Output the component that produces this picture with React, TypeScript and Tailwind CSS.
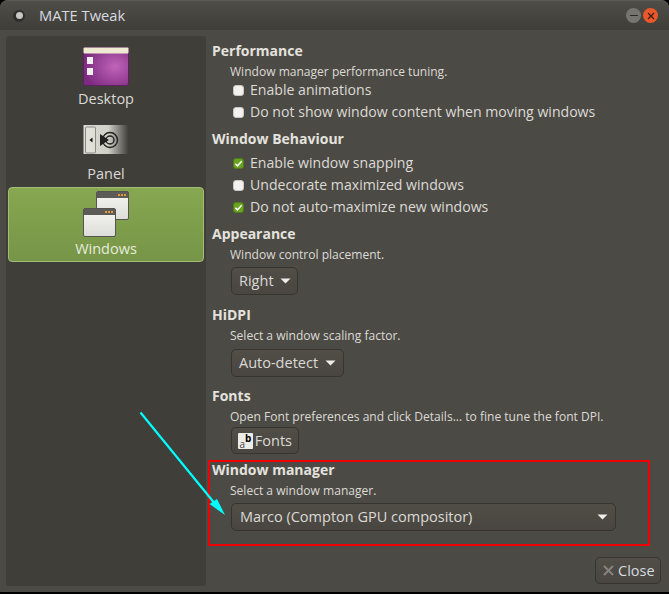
import type { ReactNode } from "react";

const Caret = () => (
  <svg width="11" height="6" viewBox="0 0 11 6" className="shrink-0">
    <path d="M0.5 0.5h10L5.5 5.5z" fill="#efedea" />
  </svg>
);

function Check({ label, checked }: { label: string; checked?: boolean }) {
  return (
    <div className="flex h-[22px] items-center pl-[3px] text-[14.1px]">
      <span
        className={`mr-[6px] flex h-[11px] w-[11px] items-center justify-center rounded-[3px] ${
          checked ? "bg-[#6aa321] border border-[#4f7d16]" : "bg-[#f2f1ef] border border-[#c9c7c3]"
        }`}
      >
        {checked && (
          <svg width="9" height="9" viewBox="0 0 10 10">
            <path d="M1.5 5.2l2.4 2.4L8.5 2.6" fill="none" stroke="#fff" strokeWidth="1.6" />
          </svg>
        )}
      </span>
      <span>{label}</span>
    </div>
  );
}

function Heading({ children, className }: { children: ReactNode; className?: string }) {
  return <h2 className={`h-[20px] text-[14px] leading-[20px] font-bold text-[#e4e2de] ${className ?? ""}`}>{children}</h2>;
}

function Desc({ children }: { children: ReactNode }) {
  return <p className="mt-px h-[20px] pl-[18px] text-[12.05px] leading-[20px] text-[#dcdad5]">{children}</p>;
}

const btn = "flex items-center rounded-[5px] border border-[#35342f] bg-gradient-to-b from-[#514e48] to-[#494641] text-[14.5px]";

function SideItem({ label, icon, active }: { label: string; icon: ReactNode; active?: boolean }) {
  return (
    <div
      className={`flex h-[75px] flex-col items-center rounded-[4px] border ${
        active ? "border-[#a3bd76] bg-gradient-to-b from-[#87a750] to-[#779548] text-[#e6ebdc]" : "border-transparent text-[#dcdad5]"
      }`}
    >
      <div className="flex h-[51px] shrink-0 items-center justify-center">{icon}</div>
      <span className="text-[14.5px] leading-[20px]">{label}</span>
    </div>
  );
}

const DesktopIcon = () => (
  <svg width="46" height="39" viewBox="0 0 46 39" className="mt-[6px]">
    <defs>
      <radialGradient id="desk" cx="0.7" cy="0.5" r="0.7">
        <stop offset="0" stopColor="#c064b8" />
        <stop offset="1" stopColor="#7c2a80" />
      </radialGradient>
    </defs>
    <rect x="0.5" y="0.5" width="45" height="38" rx="2" fill="url(#desk)" stroke="#5f1f63" />
    <rect x="0.5" y="0.5" width="45" height="6" rx="1" fill="#efebd3" />
    <path d="M4 10h6v7H4zM4 21h6v7H4z" fill="#f2eef2" />
  </svg>
);

const PanelIcon = () => (
  <svg width="46" height="32" viewBox="0 0 46 32" className="mt-[3px]">
    <defs>
      <linearGradient id="pan" x1="0" x2="1">
        <stop offset="0" stopColor="#dcdcd4" />
        <stop offset="0.55" stopColor="#d0d0c8" />
        <stop offset="1" stopColor="#3e3d38" />
      </linearGradient>
    </defs>
    <rect x="0.5" y="1" width="45" height="29" fill="url(#pan)" />
    <rect x="2.5" y="3" width="10" height="26" rx="1" fill="#e0e0d8" stroke="#8a8a84" />
    <path d="M6.500 16l3-2.500v5z" fill="#111" />
    <circle cx="27" cy="16" r="7.500" fill="none" stroke="#222" strokeWidth="1.4" />
    <circle cx="27" cy="16" r="4" fill="none" stroke="#222" strokeWidth="1.4" />
    <path d="M17 10l9 6-9 6z" fill="#222" />
  </svg>
);

const MiniWindow = () => (
  <span className="block h-[29px] w-[33px] rounded-[2px] border border-[#55544f] bg-gradient-to-b from-[#f6f6f4] to-[#dcdcd8]">
    <span className="flex h-[6px] items-center justify-end gap-[1px] bg-[#5c5b57] pr-[2px]">
      <i className="h-[2px] w-[2px] bg-[#e39a3a]" />
      <i className="h-[2px] w-[2px] bg-[#e39a3a]" />
      <i className="h-[2px] w-[2px] bg-[#e39a3a]" />
    </span>
  </span>
);

const WindowsIcon = () => (
  <div className="relative h-[46px] w-[46px]">
    <div className="absolute top-0 right-0">
      <MiniWindow />
    </div>
    <div className="absolute bottom-0 left-0">
      <MiniWindow />
    </div>
  </div>
);

export default function App() {
  return (
    <div className="relative h-[594px] w-[669px] overflow-hidden bg-black font-['Open_Sans',sans-serif] text-[14px] text-[#dcdad5]">
      <div className="flex h-[592px] flex-col rounded-t-[8px] bg-[#4c4a45]">
        {/* Title bar */}
        <header className="flex h-[30px] shrink-0 items-center rounded-t-[8px] border-t border-[#5c5a54] bg-gradient-to-b from-[#4f4d47] to-[#3f3e39] pr-[11px] pl-[13px]">
          <span className="flex h-[12px] w-[12px] items-center justify-center rounded-full bg-[#2f2e2a]">
            <span className="h-[7px] w-[7px] rounded-full bg-[#c9c7c2]" />
          </span>
          <span className="ml-[14px] flex-1 text-[14.7px] text-[#d6dbe0]">MATE Tweak</span>
          <span className="flex h-[15px] w-[15px] items-center justify-center rounded-full bg-[#77756f]">
            <span className="h-[1px] w-[8px] bg-[#2c2b28]" />
          </span>
          <span className="ml-[2px] flex h-[15px] w-[15px] items-center justify-center rounded-full bg-[#e8582a]">
            <svg width="8" height="8" viewBox="0 0 8 8">
              <path d="M1 1l6 6M7 1l-6 6" stroke="#3b1a0c" strokeWidth="1.2" />
            </svg>
          </span>
        </header>

        <div className="flex min-h-0 flex-1 p-[6px]">
          {/* Sidebar */}
          <aside className="flex h-[550px] w-[200px] shrink-0 flex-col rounded-[3px] bg-[#3f3e39] px-[2px] pt-[1px]">
            <SideItem label="Desktop" icon={<DesktopIcon />} />
            <SideItem label="Panel" icon={<PanelIcon />} />
            <SideItem label="Windows" icon={<WindowsIcon />} active />
          </aside>

          {/* Settings */}
          <main className="relative flex-1 pt-[5px] pl-[6px]">
            <Heading>Performance</Heading>
            <Desc>Window manager performance tuning.</Desc>
            <div className="-mt-[3px] pl-[18px]">
              <Check label="Enable animations" />
              <Check label="Do not show window content when moving windows" />
            </div>

            <Heading className="mt-[6px]">Window Behaviour</Heading>
            <div className="mt-[3px] pl-[18px]">
              <Check label="Enable window snapping" checked />
              <Check label="Undecorate maximized windows" />
              <Check label="Do not auto-maximize new windows" checked />
            </div>

            <Heading className="mt-[6px]">Appearance</Heading>
            <Desc>Window control placement.</Desc>
            <div className="mt-[2px] pl-[19px]">
              <button className={`${btn} h-[28px] w-[67px] gap-[6px] px-[7px]`}>
                Right <Caret />
              </button>
            </div>

            <Heading className="mt-[10px]">HiDPI</Heading>
            <Desc>Select a window scaling factor.</Desc>
            <div className="mt-[3px] pl-[19px]">
              <button className={`${btn} h-[28px] w-[113px] justify-between px-[7px]`}>
                Auto-detect <Caret />
              </button>
            </div>

            <Heading className="mt-[9px]">Fonts</Heading>
            <Desc>Open Font preferences and click Details... to fine tune the font DPI.</Desc>
            <div className="pl-[19px]">
              <button className={`${btn} h-[27px] w-[68px] gap-[2px] px-[6px]`}>
                <span className="flex h-[16px] w-[15px] justify-center rounded-[1px] bg-[#ecece8] text-[10px] leading-[10px]">
                  <span className="self-end text-[#444]">a</span>
                  <span className="self-start font-bold text-black">b</span>
                </span>
                Fonts
              </button>
            </div>

            <Heading className="mt-[6px]">Window manager</Heading>
            <Desc>Select a window manager.</Desc>
            <div className="mt-[2px] pl-[19px]">
              <button className={`${btn} h-[28px] w-[385px] justify-between pr-[7px] pl-[8px]`}>
                Marco (Compton GPU compositor) <Caret />
              </button>
            </div>

            <div className="absolute top-[521px] right-[2px]">
              <button className={`${btn} h-[27px] w-[66px] gap-[4px] px-[7px] text-[#d6dbe0]`}>
                <svg width="11" height="11" viewBox="0 0 11 11" className="shrink-0">
                  <path d="M1 1l9 9M10 1l-9 9" stroke="#85837d" strokeWidth="2" />
                </svg>
                Close
              </button>
            </div>
          </main>
        </div>
      </div>

      {/* Annotation */}
      <div className="absolute top-[460px] left-[208px] h-[86px] w-[442px] border-2 border-[#f00000]" />
      <svg className="absolute top-0 left-0" width="669" height="594" viewBox="0 0 669 594">
        <path d="M140.500 412.500L216 505" stroke="#00ffff" strokeWidth="2.2" />
        <path d="M225 515l-15.500-11 7.500-5z" fill="#00ffff" />
      </svg>
    </div>
  );
}
